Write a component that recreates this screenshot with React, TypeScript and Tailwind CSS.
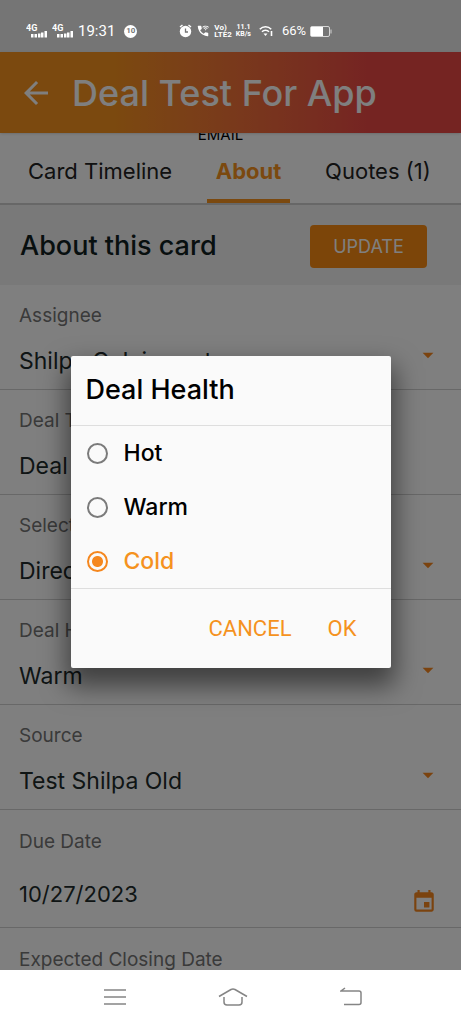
import { useState } from 'react';
import { MdArrowBack, MdArrowDropDown, MdInsertInvitation, MdWifiCalling3 } from 'react-icons/md';

const HEALTH_OPTIONS = ['Hot', 'Warm', 'Cold'];

const TABS = ['Card Timeline', 'About', 'Quotes (1)'];

function Signal() {
  return (
    <svg className="h-4 w-[21px]" viewBox="0 0 21 16" fill="white" aria-hidden="true">
      <text x="0" y="8" fontSize="9" fontWeight="700" fontFamily="Roboto">4G</text>
      <path d="M5 11h2.500v3.500H5zM8.500 11H11v3.500H8.500zM12 10.500h2.500v4H12zM15 9.500h2.500v5H15zM18.500 8H21v6.500h-2.500z" />
    </svg>
  );
}

function StatusBar() {
  return (
    <div className="relative z-20 flex h-[52px] items-center pt-[10px] pl-[26px] font-[Roboto] text-white">
      <div className="flex items-center gap-[5px]">
        <Signal />
        <Signal />
        <span className="text-[15px]">19:31</span>
        <span className="ml-1 flex h-[13px] w-[13px] items-center justify-center rounded-full bg-white text-[8px] font-bold text-[#757575]">
          10
        </span>
      </div>
      <div className="ml-[42px] flex items-center gap-1">
        <svg className="h-[14px] w-[13px]" viewBox="0 0 13 14" aria-hidden="true">
          <circle cx="6.5" cy="7.5" r="5.7" fill="white" />
          <path d="M1 3l2.500-2M12 3L9.500 1" stroke="white" strokeWidth="1.500" />
          <path d="M6.500 4.500v3.500H9" stroke="#757575" strokeWidth="1.300" fill="none" />
        </svg>
        <MdWifiCalling3 className="h-[14px] w-[14px]" />
        <span className="flex flex-col text-[8px] leading-[7px] font-bold">
          <span>Vo)</span>
          <span>LTE2</span>
        </span>
        <span className="flex flex-col items-center text-[7px] leading-[7px] font-bold">
          <span>11.1</span>
          <span>KB/s</span>
        </span>
        <svg className="mx-1 h-3 w-[15px]" viewBox="0 0 15 12" fill="none" stroke="white" strokeWidth="1.600" aria-hidden="true">
          <path d="M.8 4.200a8 8 0 0 1 11.400 0M3 6.800a5 5 0 0 1 7 0" />
          <path d="M4.500 8.500h4l-2 2.500z" fill="white" stroke="none" />
          <path d="M12.500 6v5" />
        </svg>
        <span className="text-[13px]">66%</span>
        <svg className="h-[11px] w-[22px]" viewBox="0 0 22 11" aria-hidden="true">
          <rect x=".5" y=".5" width="19" height="10" rx="1.500" fill="none" stroke="white" opacity=".7" />
          <rect x="1" y="1" width="12" height="9" fill="white" />
          <path d="M21 3.500v4" stroke="white" opacity=".7" />
        </svg>
      </div>
    </div>
  );
}

function SelectField({ id, label, value }: { id: string; label: string; value: string }) {
  return (
    <div className="relative h-[105px] border-b border-[#d0d0d0] px-[19px] pt-[19px]">
      <label htmlFor={id} className="block text-[19px] leading-6 text-[#757575]">
        {label}
      </label>
      <select
        id={id}
        defaultValue={value}
        className="mt-[17px] block h-8 w-full appearance-none bg-transparent text-[23px] leading-8 text-[#212b2b] outline-none"
      >
        <option>{value}</option>
      </select>
      <MdArrowDropDown className="pointer-events-none absolute top-[57px] right-5 h-[26px] w-[26px] text-[#f7871e]" />
    </div>
  );
}

export default function App() {
  const [health, setHealth] = useState('Cold');

  return (
    <div className="relative flex h-screen flex-col overflow-hidden bg-[#eaeaea] font-[Inter,sans-serif]">
      <StatusBar />

      <header className="relative z-1 flex h-[81px] shrink-0 items-center gap-[18px] bg-linear-to-r from-[#f7921e] from-25% to-[#eb4845] to-80% px-[18px] text-white shadow">
        <button aria-label="Back">
          <MdArrowBack className="h-9 w-9" />
        </button>
        <h1 className="text-[36px] leading-10 font-medium">Deal Test For App</h1>
      </header>

      <nav className="relative flex h-[72px] shrink-0 items-end gap-[35px] border-b-2 border-[#cfcfcf] bg-white pl-7 text-[22px] text-[#222]">
        {/* scrolled under the header */}
        <span className="absolute inset-x-0 -top-1 pr-5 text-center text-[15px] leading-3 text-black">EMAIL</span>
        {TABS.map((tab) => (
          <button
            key={tab}
            className={
              tab === 'About'
                ? 'h-[60px] w-[83px] border-b-4 border-[#f7921e] font-bold text-[#f7921e]'
                : 'h-[60px] border-b-4 border-transparent whitespace-nowrap'
            }
          >
            {tab}
          </button>
        ))}
      </nav>

      <main className="min-h-0 flex-1 overflow-hidden bg-white">
        <div className="flex h-20 items-center justify-between bg-[#f2f2f2] pt-[3px] pr-[34px] pl-5">
          <h2 className="text-[27px] font-medium text-[#10201f]">About this card</h2>
          <button className="h-[43px] w-[117px] rounded bg-[#f98a12] text-[18px] text-white">UPDATE</button>
        </div>

        <SelectField id="assignee" label="Assignee" value="Shilpa C Jaiswant" />
        <div className="h-[105px] border-b border-[#d0d0d0] px-[19px] pt-[19px]">
          <label htmlFor="title" className="block text-[19px] leading-6 text-[#757575]">
            Deal Title
          </label>
          <input
            id="title"
            defaultValue="Deal Test For App"
            className="mt-[17px] block h-8 w-full bg-transparent text-[23px] text-[#212b2b] outline-none"
          />
        </div>
        <SelectField id="pipeline" label="Select Pipeline" value="Direct Sales" />
        <SelectField id="health" label="Deal Health" value="Warm" />
        <SelectField id="source" label="Source" value="Test Shilpa Old" />

        <div className="relative h-[118px] border-b border-[#d0d0d0] px-[19px] pt-5">
          <label htmlFor="due" className="block text-[19px] leading-6 text-[#757575]">
            Due Date
          </label>
          <input
            id="due"
            defaultValue="10/27/2023"
            className="mt-6 block h-8 w-full bg-transparent text-[22px] text-[#212b2b] outline-none"
          />
          <MdInsertInvitation className="absolute right-6 bottom-3 h-[26px] w-[26px] text-[#f7871e]" />
        </div>
        <div className="px-[19px] pt-5">
          <label htmlFor="closing" className="block text-[19px] leading-6 text-[#757575]">
            Expected Closing Date
          </label>
          <input id="closing" className="mt-6 block h-8 w-full bg-transparent outline-none" />
        </div>
      </main>

      {/* Backdrop + dialog */}
      <div className="absolute inset-0 z-10 flex items-center justify-center bg-black/50">
        <form
          role="dialog"
          aria-label="Deal Health"
          onSubmit={(e) => e.preventDefault()}
          className="w-80 rounded-xs bg-[#fafafa] shadow-[0_14px_26px_4px_rgba(0,0,0,0.5)]"
        >
          <h2 className="flex h-[70px] items-center border-b border-[#dedede] px-[15px] text-[27px] font-medium text-black">
            Deal Health
          </h2>
          <div>
            {HEALTH_OPTIONS.map((option) => (
              <label
                key={option}
                className="flex h-[54px] items-center gap-4 px-4 text-[23px] font-medium text-black has-checked:text-[#f5921e]"
              >
                <input
                  type="radio"
                  name="health"
                  checked={health === option}
                  onChange={() => setHealth(option)}
                  className="h-[21px] w-[21px] appearance-none rounded-full border-2 border-[#7b7b7b] checked:border-[#f5871e] checked:bg-[radial-gradient(#f5871e_5px,transparent_6px)]"
                />
                {option}
              </label>
            ))}
          </div>
          <div className="flex h-20 items-center justify-end gap-9 border-t border-[#dedede] px-[34px] font-[Roboto] text-[22px] text-[#f5921e]">
            <button type="button">CANCEL</button>
            <button type="submit">OK</button>
          </div>
        </form>
      </div>

      {/* System navigation */}
      <div className="relative z-20 flex h-[54px] shrink-0 items-center justify-center gap-[92px] bg-white pl-1 text-[#858585]">
        <button aria-label="Recent apps">
          <svg className="h-5 w-[22px]" viewBox="0 0 22 20" fill="none" stroke="currentColor" strokeWidth="1.500">
            <path d="M0 3h22M0 10h22M0 17h22" />
          </svg>
        </button>
        <button aria-label="Home">
          <svg className="h-5 w-[30px]" viewBox="0 0 30 20" fill="none" stroke="currentColor" strokeWidth="1.500">
            <path d="M1 9.500L13 2.500q2-1 4 0l12 7M6 10v5q0 3 3 3h12q3 0 3-3v-5" />
          </svg>
        </button>
        <button aria-label="Go back">
          <svg className="h-5 w-[22px]" viewBox="0 0 22 20" fill="none" stroke="currentColor" strokeWidth="1.500">
            <path d="M5 1L1 4h18q2 0 2 2v9.500q0 2-2 2H4" />
          </svg>
        </button>
      </div>
    </div>
  );
}
